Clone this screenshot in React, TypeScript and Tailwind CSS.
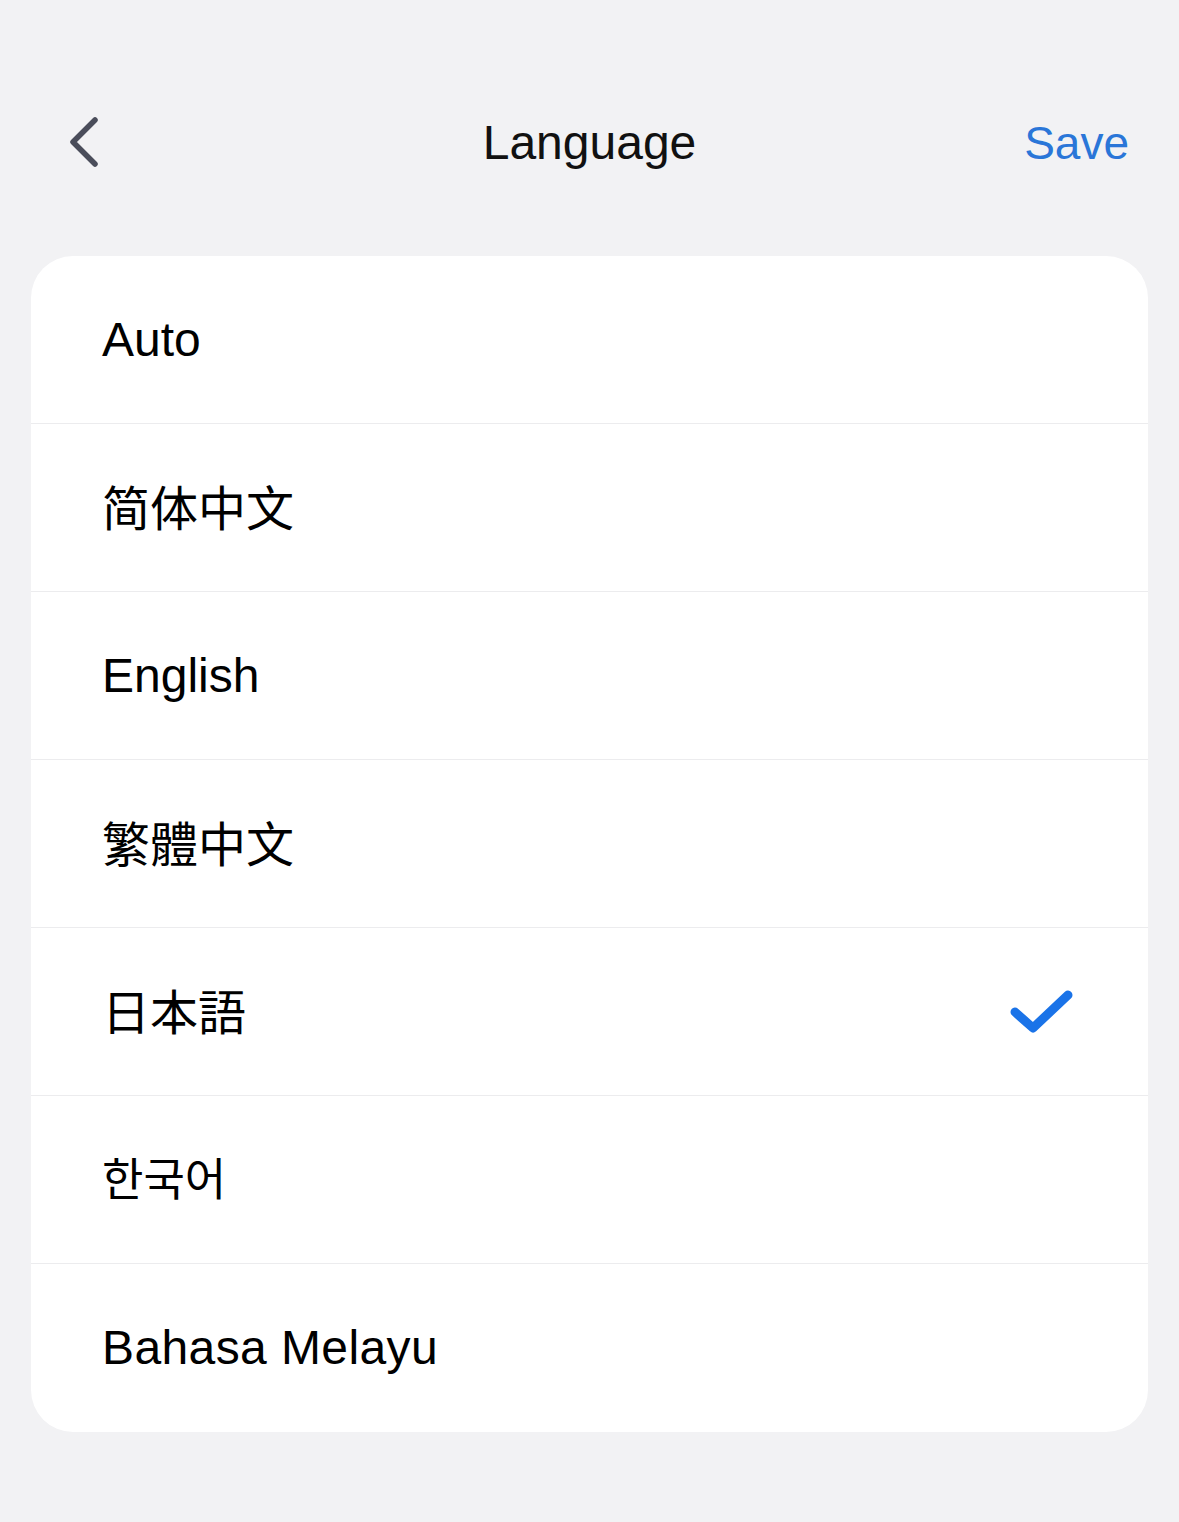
import { useState } from 'react';

const languages = [
  { label: 'Auto', font: "'Liberation Sans', 'Noto Sans CJK SC', sans-serif", size: 'text-[48px]' },
  { label: '简体中文', font: "'Liberation Sans', 'Noto Sans CJK SC', sans-serif", size: 'text-[48px] pt-[4px]' },
  { label: 'English', font: "'Liberation Sans', 'Noto Sans CJK SC', sans-serif", size: 'text-[48px]' },
  { label: '繁體中文', font: "'Liberation Sans', 'Noto Sans CJK TC', sans-serif", size: 'text-[48px] pt-[4px]' },
  { label: '日本語', font: "'Liberation Sans', 'Noto Sans CJK JP', sans-serif", size: 'text-[48px] pt-[4px]' },
  { label: '한국어', font: "'Liberation Sans', 'Noto Sans CJK KR', sans-serif", size: 'text-[45px] pt-[2px]' },
  { label: 'Bahasa Melayu', font: "'Liberation Sans', 'Noto Sans CJK SC', sans-serif", size: 'text-[48px] tracking-[0.4px]' },
];

export default function App() {
  const [selected, setSelected] = useState(4);

  return (
    <div
      className="min-h-[1522px] w-full bg-[#f2f2f4] pt-[93px]"
      style={{ fontFamily: "'Liberation Sans', 'Noto Sans CJK SC', sans-serif" }}
    >
      <header className="relative flex h-[100px] items-center justify-between pl-[62px] pr-[50px]">
        <button className="flex h-[60px] w-[44px] items-center justify-center">
          <svg width="40" height="60" viewBox="0 0 40 60" fill="none">
            <path
              d="M31 7 L9 29 L31 51"
              stroke="#4a4d5a"
              strokeWidth="5.5"
              strokeLinecap="round"
              strokeLinejoin="round"
            />
          </svg>
        </button>
        <h1 className="absolute left-1/2 -translate-x-1/2 text-[48px] leading-none text-[#111111]">Language</h1>
        <button className="text-[46px] leading-none text-[#2a76d8]">Save</button>
      </header>

      <div className="mx-[31px] mt-[63px] overflow-hidden rounded-[42px] bg-white">
        {languages.map((lang, i) => (
          <div
            key={lang.label}
            onClick={() => setSelected(i)}
            className={`flex h-[168px] items-center justify-between pl-[71px] pr-[74px] ${
              i < languages.length - 1 ? 'border-b border-[#ececee]' : ''
            }`}
          >
            <span className={`${lang.size} leading-none text-black`} style={{ fontFamily: lang.font }}>
              {lang.label}
            </span>
            {selected === i && (
              <svg width="66" height="46" viewBox="0 0 66 46" fill="none">
                <path
                  d="M7 23 L25 39 L60 6"
                  stroke="#1a73e8"
                  strokeWidth="9"
                  strokeLinecap="round"
                  strokeLinejoin="round"
                />
              </svg>
            )}
          </div>
        ))}
      </div>
    </div>
  );
}
